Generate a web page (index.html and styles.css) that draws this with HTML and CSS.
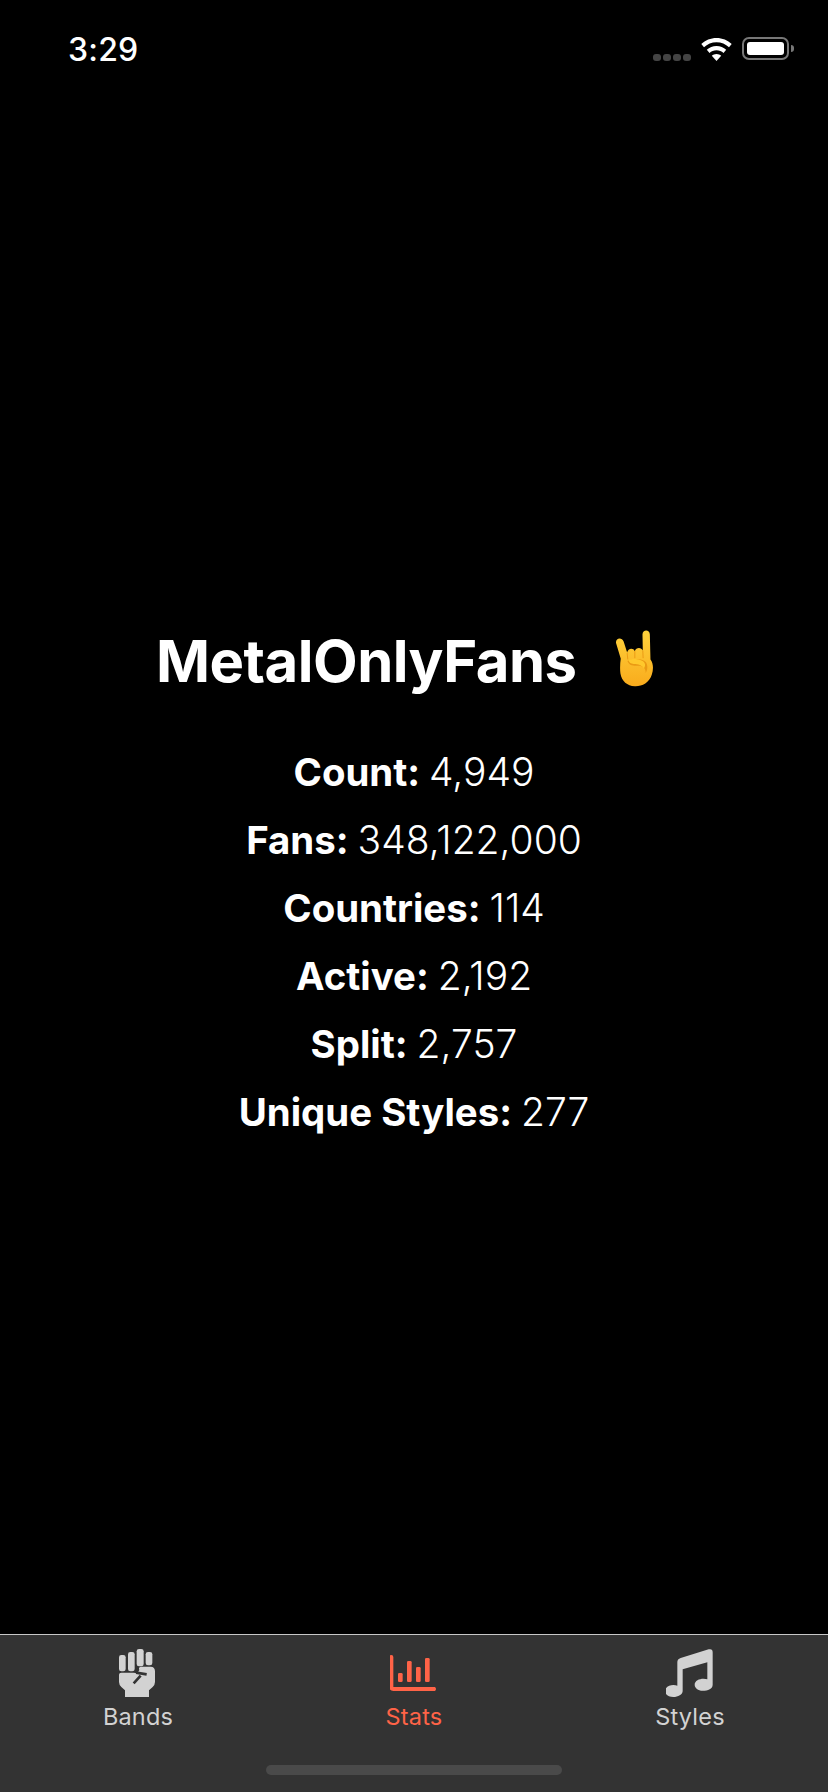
FILE: index.html
```html
<!DOCTYPE html>
<html lang="en">
<head>
    <meta charset="UTF-8">
    <meta name="viewport" content="width=device-width, initial-scale=1.0">
    <title>MetalOnlyFans</title>
    <link rel="stylesheet" href="styles.css">
</head>
<body>

    <div class="screen">
        <header class="status-bar">
            <span class="time">3:29</span>
            <div class="status-icons">
                <div class="signal">
                    <span class="dot"></span>
                    <span class="dot"></span>
                    <span class="dot"></span>
                    <span class="dot"></span>
                </div>
                <svg class="wifi" viewBox="0 0 31 23">
                    <path d="M15.5 0C9.6 0 4.300 2.300 0.300 6.100L3 9.300C6.300 6.200 10.700 4.300 15.500 4.300S24.700 6.200 28 9.300L30.700 6.100C26.700 2.300 21.400 0 15.500 0Z"/>
                    <path d="M15.500 8C11.800 8 8.400 9.400 5.800 11.800L8.500 15C10.300 13.300 12.800 12.300 15.500 12.300S20.700 13.300 22.500 15L25.200 11.800C22.600 9.400 19.200 8 15.500 8Z"/>
                    <path d="M15.500 16C13.700 16 12 16.700 10.800 17.800L15.500 23L20.200 17.800C19 16.700 17.300 16 15.500 16Z"/>
                </svg>
                <div class="battery"><div class="battery-fill"></div></div>
                <div class="battery-nub"></div>
            </div>
        </header>

        <main class="stats">
            <h1 class="title">
                <span>MetalOnlyFans</span>
                <svg class="emoji" viewBox="40 30 122 178">
                    <defs>
                        <linearGradient id="handFill" x1="0" y1="0" x2="0" y2="1">
                            <stop offset="0" stop-color="#ffd23c"/>
                            <stop offset="1" stop-color="#f9ab1c"/>
                        </linearGradient>
                    </defs>
                    <path fill="url(#handFill)" d="M43 70C42 54 62 52 67 66L78 100C80 86 98 84 102 96C105 84 122 82 127 94L126 44C126 27 149 27 149 44L151 122C160 134 161 152 155 170C147 195 124 207 102 206C78 205 61 190 57 166C55 150 56 134 58 120Z"/>
                    <path fill="#ea9a14" d="M79 127C92 118 126 118 136 130C144 140 142 156 136 164C136 150 128 142 112 142C98 142 84 142 79 127Z"/>
                    <path fill="#ffc82c" d="M82 124C94 118 124 120 132 132C136 138 134 146 130 150C126 140 112 136 98 136C90 136 84 132 82 124Z"/>
                    <path fill="none" stroke="#ea9a14" stroke-width="3" d="M78 102L80 122M102 96L102 118M127 94L128 118"/>
                </svg>
            </h1>
            <p class="row"><b>Count:</b> 4,949</p>
            <p class="row"><b>Fans:</b> 348,122,000</p>
            <p class="row"><b>Countries:</b> 114</p>
            <p class="row"><b>Active:</b> 2,192</p>
            <p class="row"><b>Split:</b> 2,757</p>
            <p class="row"><b>Unique Styles:</b> 277</p>
        </main>

        <nav class="tab-bar">
            <div class="tabs">
                <div class="tab">
                    <svg class="tab-icon" viewBox="42 27 144 144">
                        <rect x="57" y="45" width="20" height="49" rx="7"/>
                        <rect x="84" y="36" width="20" height="58" rx="7"/>
                        <rect x="110" y="27" width="21" height="52" rx="7"/>
                        <rect x="137" y="36" width="20" height="40" rx="7"/>
                        <path d="M57 104Q57 98 64 98L100 98Q108 98 112 100L118 90Q114 81 124 80L152 80Q165 80 165 94L165 126Q165 134 158 141L147 151L147 171L75 171L75 151L64 141Q57 134 57 126Z"/>
                        <path class="fist-cut" d="M101 130L122 107M108 98L140 103"/>
                    </svg>
                    <span class="tab-label">Bands</span>
                </div>
                <div class="tab tab-active">
                    <svg class="tab-icon" viewBox="30 27 144 144">
                        <path d="M34 45Q40 45 40 51L40 141L165 141Q171 147 165 153L40 153Q28 153 28 141L28 51Q28 45 34 45Z"/>
                        <rect x="54" y="99" width="14" height="27" rx="4"/>
                        <rect x="81" y="63" width="14" height="63" rx="4"/>
                        <rect x="108" y="81" width="14" height="45" rx="4"/>
                        <rect x="135" y="54" width="14" height="72" rx="4"/>
                    </svg>
                    <span class="tab-label">Stats</span>
                </div>
                <div class="tab">
                    <svg class="tab-icon" viewBox="48 27 144 144">
                        <path d="M92 54L176 28Q188 25 188 37L188 134C188 146 174 152 158 152C144 152 134 144 134 134C134 122 148 116 160 116C165 116 169 117 172 118L172 67L98 88L98 153C98 164 84 171 70 171C56 171 45 164 45 153C45 142 58 135 70 135C75 135 79 136 82 137L82 66Q82 57 92 54Z"/>
                    </svg>
                    <span class="tab-label">Styles</span>
                </div>
            </div>
            <div class="home-indicator"></div>
        </nav>
    </div>

</body>
</html>
```

FILE: styles.css
```css
* {
    box-sizing: border-box;
}
body {
    margin: 0;
    background-color: #000;
    color: #fff;
    font-family: "Inter", "Liberation Sans", sans-serif;
}
.screen {
    display: flex;
    flex-direction: column;
    height: 1792px;
}

/* status bar */
.status-bar {
    display: flex;
    justify-content: space-between;
    height: 88px;
    padding: 31px 34px 0 68px;
}
.time {
    font-size: 32px;
    font-weight: 550;
    letter-spacing: 0.2px;
    line-height: 38px;
}
.status-icons {
    display: flex;
    align-items: flex-start;
    padding-top: 6px;
}
.signal {
    display: flex;
    gap: 2px;
    margin: 17px 10px 0 0;
}
.dot {
    width: 8px;
    height: 7px;
    border-radius: 3px;
    background-color: #444;
}
.wifi {
    width: 31px;
    height: 23px;
    margin: 1px 10px 0 0;
    fill: #fff;
}
.battery {
    width: 47px;
    height: 23px;
    padding: 3px;
    border: 2px solid #777;
    border-radius: 7px;
}
.battery-fill {
    height: 100%;
    border-radius: 3px;
    background-color: #fff;
}
.battery-nub {
    width: 3px;
    height: 7px;
    margin: 8px 0 0 2px;
    border-radius: 0 3px 3px 0;
    background-color: #777;
}

/* stats */
.stats {
    flex: 1;
    display: flex;
    flex-direction: column;
    align-items: center;
    justify-content: center;
    padding-top: 52px;
}
.title {
    display: flex;
    align-items: center;
    width: 516px;
    height: 64px;
    margin: 0 0 45px;
    font-size: 58px;
    font-weight: 700;
    letter-spacing: -0.5px;
}
.emoji {
    width: 39px;
    height: 57px;
    margin: 0 0 4px 38px;
}
.row {
    margin: 0;
    font-size: 39px;
    font-weight: 300;
    line-height: 68px;
    word-spacing: -2px;
}
.row b {
    font-size: 38.4px;
    font-weight: 700;
    word-spacing: 0;
}

/* tab bar */
.tab-bar {
    display: flex;
    flex-direction: column;
    height: 158px;
    border-top: 1px solid #c8c8c8;
    background-color: #333;
}
.tabs {
    display: flex;
    padding-top: 14px;
}
.tab {
    flex: 1;
    display: flex;
    flex-direction: column;
    align-items: center;
    color: #d2d2d2;
}
.tab-active {
    color: #ff6347;
}
.tab-icon {
    display: block;
    width: 48px;
    height: 48px;
    fill: currentColor;
}
.fist-cut {
    fill: none;
    stroke: #333;
    stroke-width: 8;
}
.tab-label {
    margin-top: 6px;
    font-size: 23.5px;
    letter-spacing: 0.2px;
    line-height: 28px;
}
.home-indicator {
    width: 296px;
    height: 10px;
    margin: 34px auto 0;
    border-radius: 5px;
    background-color: #4a4a4a;
}
```
